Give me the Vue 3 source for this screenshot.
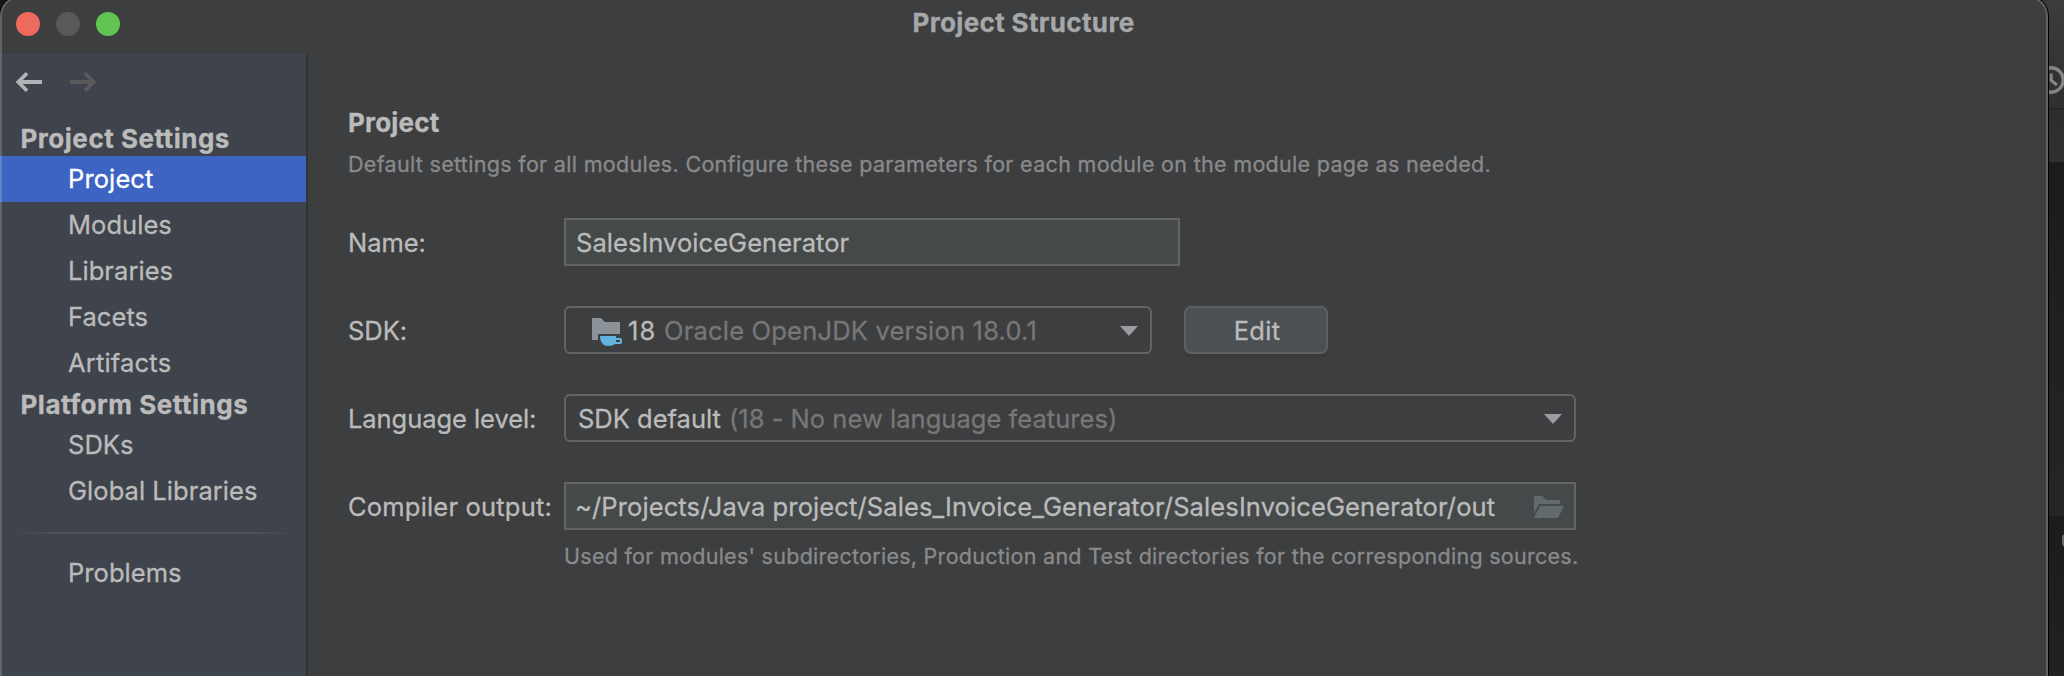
<script setup>
import { ref } from 'vue'

const groups = [
  {
    title: 'Project Settings',
    items: [
      { label: 'Project', cls: 'ls-2' },
      { label: 'Modules', cls: 'ls-1' },
      { label: 'Libraries', cls: 'ls-1' },
      { label: 'Facets', cls: 'ls-1' },
      { label: 'Artifacts', cls: 'ls-4' },
    ],
  },
  {
    title: 'Platform Settings',
    items: [
      { label: 'SDKs', cls: 'ls-1' },
      { label: 'Global Libraries', cls: 'ls-1' },
    ],
  },
]
const selected = ref('Project')
const projectName = 'SalesInvoiceGenerator'
const outputPath = '~/Projects/Java project/Sales_Invoice_Generator/SalesInvoiceGenerator/out'
</script>

<template>
  <div class="desktop">
    <div class="behind">
      <svg class="clock" width="30" height="30" viewBox="0 0 30 30">
        <circle cx="15" cy="15" r="12.2" fill="none" stroke="#858585" stroke-width="3.4" />
        <path d="M15.2 8.5V15.5L21 20" fill="none" stroke="#858585" stroke-width="3" />
      </svg>
      <span class="pill"></span>
    </div>

    <div class="window">
      <header class="titlebar">
        <div class="lights">
          <span class="light close"></span>
          <span class="light mini"></span>
          <span class="light zoomed"></span>
        </div>
        <h1 class="title">Project Structure</h1>
      </header>

      <div class="body">
        <aside class="sidebar">
          <div class="history">
            <svg width="28" height="20" viewBox="0 0 28 20" fill="none" stroke="#b1b3b6">
              <path d="M3 10H27" stroke-width="4" />
              <path d="M12 1.3L3.2 10L12 18.7" stroke-width="3.6" />
            </svg>
            <svg width="28" height="20" viewBox="0 0 28 20" fill="none" stroke="#5a5a5a">
              <path d="M1 10H25" stroke-width="4" />
              <path d="M16 1.3L24.8 10L16 18.7" stroke-width="3.6" />
            </svg>
          </div>
          <template v-for="group in groups" :key="group.title">
            <h2 class="group">{{ group.title }}</h2>
            <div
              v-for="item in group.items"
              :key="item.label"
              class="item"
              :class="[item.cls, { selected: selected === item.label }]"
              @click="selected = item.label"
            >{{ item.label }}</div>
          </template>
          <div class="separator"></div>
          <div class="item ls-1">Problems</div>
        </aside>

        <main class="content">
          <h3 class="heading">Project</h3>
          <p class="desc">Default settings for all modules. Configure these parameters for each module on the module page as needed.</p>

          <div class="form">
            <div class="row">
              <label class="label ls-m">Name:</label>
              <div class="field name ls-1">{{ projectName }}</div>
            </div>

            <div class="row">
              <label class="label ls-m">SDK:</label>
              <div class="combo sdk">
                <svg class="sdk-icon" width="32" height="32" viewBox="0 0 32 32">
                  <path d="M2 4H10C13 4 13 8 16 8H30V20H8V26H2Z" fill="#8b929a" />
                  <path d="M10 22H26V24H30A2 2 0 0 1 32 26V28A2 2 0 0 1 30 30H25C23.500 31.300 21 32 18 32C13 32 10 28 10 22ZM26 26V28H30V26Z" fill="#62b3df" fill-rule="evenodd" />
                </svg>
                <span class="ver">18</span>
                <span class="dim jdk">Oracle OpenJDK version 18.0.1</span>
                <svg class="arrow" width="18" height="10" viewBox="0 0 18 10"><path d="M0 0H18L9 10Z" fill="#9b9c9f" /></svg>
              </div>
              <button class="edit">Edit</button>
            </div>

            <div class="row">
              <label class="label ls-m">Language level:</label>
              <div class="combo lang">
                <span>SDK default</span>
                <span class="dim feat">(18 - No new language features)</span>
                <svg class="arrow" width="18" height="10" viewBox="0 0 18 10"><path d="M0 0H18L9 10Z" fill="#9b9c9f" /></svg>
              </div>
            </div>

            <div class="row">
              <label class="label ls-4">Compiler output:</label>
              <div class="field path ls-2">
                <span>{{ outputPath }}</span>
                <svg class="folder" width="30" height="22" viewBox="0 0 30 22" fill="#616a6f">
                  <path d="M0 0H8.500L12 4H26V8H5L0 17Z" />
                  <path d="M6 10H30L24 22H0Z" />
                </svg>
              </div>
            </div>
          </div>
          <p class="hint">Used for modules' subdirectories, Production and Test directories for the corresponding sources.</p>
        </main>
      </div>
    </div>
  </div>
</template>

<style>
body {
  margin: 0;
  background: #1d1d1d;
}
</style>

<style scoped>
.desktop {
  position: relative;
  width: 2064px;
  height: 676px;
  overflow: hidden;
  background: #161616;
  font-family: Inter, "Liberation Sans", sans-serif;
  font-size: 25.5px;
  color: #bbbbbb;
  -webkit-text-stroke: 0.3px currentColor;
}
.behind {
  position: absolute;
  top: 0;
  right: 0;
  width: 40px;
  height: 676px;
  background: linear-gradient(#3b3c3d 0, #2e2f30 108px, #242526 108px, #242526 110px, #2b2d2e 110px, #2e3031 162px, #1b1b1b 162px, #1f1f1f 300px, #252525 516px, #1b1b1b 516px, #212121 676px);
}
.clock {
  position: absolute;
  left: 12px;
  top: 65px;
}
.pill {
  position: absolute;
  left: 38px;
  top: 534px;
  width: 12px;
  height: 13px;
  border-radius: 4px;
  background: #6a6a6a;
}
.window {
  position: absolute;
  left: 0;
  top: -4px;
  width: 2048px;
  height: 700px;
  box-sizing: border-box;
  padding-top: 4px;
  border-radius: 20px;
  overflow: hidden;
  background: #3d3e40;
  box-shadow: 0 0 0 1px #000;
}
.window::after {
  content: "";
  position: absolute;
  inset: 0;
  border: 2px solid rgba(255, 255, 255, 0.19);
  border-radius: 20px;
  pointer-events: none;
}
.titlebar {
  height: 54px;
  display: grid;
  grid-template-columns: 200px 1fr 200px;
}
.lights {
  display: flex;
  gap: 16px;
  padding: 12px 0 0 16px;
}
.light {
  width: 24px;
  height: 24px;
  border-radius: 50%;
}
.close { background: #ed6a5e; }
.mini { background: #58595b; }
.zoomed { background: #61c554; }
.title {
  margin: 0;
  padding: 7px 1px 0 0;
  text-align: center;
  font-size: 26px;
  line-height: 32px;
  letter-spacing: 0.36px;
  color: #a6a7a9;
}
.body {
  display: flex;
  height: 622px;
}
.sidebar {
  width: 306px;
  flex: none;
  background: #3f434c;
  border-right: 2px solid #333333;
}
.history {
  display: flex;
  gap: 26px;
  height: 48px;
  padding: 18px 0 0 15px;
}
.group {
  margin: 0;
  padding-left: 20.5px;
  height: 36px;
  line-height: 38px;
  font-size: 26px;
  letter-spacing: 0.52px;
}
.item {
  height: 46px;
  line-height: 46px;
  padding-left: 68px;
  white-space: nowrap;
}
.selected {
  background: #3d64c2;
  color: #ffffff;
}
.separator {
  height: 2px;
  margin: 18px 10px 16px 14px;
  background: linear-gradient(90deg, transparent, #515151 15%, #515151 85%, transparent);
}
.content {
  flex: 1;
  padding: 53px 0 0 40px;
  white-space: nowrap;
}
.heading {
  margin: 0;
  font-size: 26px;
  line-height: 32px;
  letter-spacing: 0.2px;
}
.desc,
.hint {
  margin: 11px 0 0;
  font-size: 21.5px;
  line-height: 28px;
  color: #8a8a8a;
  letter-spacing: 0.311px;
}
.hint {
  margin-top: 12px;
  padding-left: 216px;
  letter-spacing: 0.275px;
}
.form {
  display: flex;
  flex-direction: column;
  gap: 40px;
  margin-top: 40px;
}
.row {
  display: flex;
  height: 48px;
  line-height: 49px;
}
.label {
  width: 216px;
  flex: none;
}
.field,
.combo {
  box-sizing: border-box;
  height: 48px;
  line-height: 45px;
  border: 2px solid #646464;
  display: flex;
}
.field {
  background: #45494a;
  padding-left: 10px;
}
.name { width: 616px; }
.path {
  width: 1012px;
  padding-left: 9px;
}
.combo {
  border-radius: 6px;
  padding-left: 12px;
}
.sdk {
  width: 588px;
  padding-left: 24px;
}
.lang { width: 1012px; }
.sdk-icon { margin-top: 6px; }
.ver {
  margin-left: 6px;
  width: 36px;
  letter-spacing: 1.1px;
}
.dim { color: #777777; }
.jdk { letter-spacing: 0.2px; }
.feat {
  margin-left: 8px;
  letter-spacing: 0.032px;
}
.arrow {
  margin: 18px 12px 0 auto;
}
.folder {
  margin: 12px 10px 0 auto;
}
.edit {
  box-sizing: border-box;
  width: 144px;
  height: 48px;
  margin: 0 0 0 32px;
  padding: 0 0 0 2px;
  border: 2px solid #5e6060;
  border-radius: 7px;
  background: #4c5052;
  box-shadow: 0 4px 0 #38393a;
  font: inherit;
  line-height: 45px;
  letter-spacing: 0.29px;
  color: #bbbbbb;
}
.ls-1 { letter-spacing: 0.05px; }
.ls-2 { letter-spacing: 0.115px; }
.ls-4 { letter-spacing: 0.19px; }
.ls-m { letter-spacing: -0.06px; }
</style>
